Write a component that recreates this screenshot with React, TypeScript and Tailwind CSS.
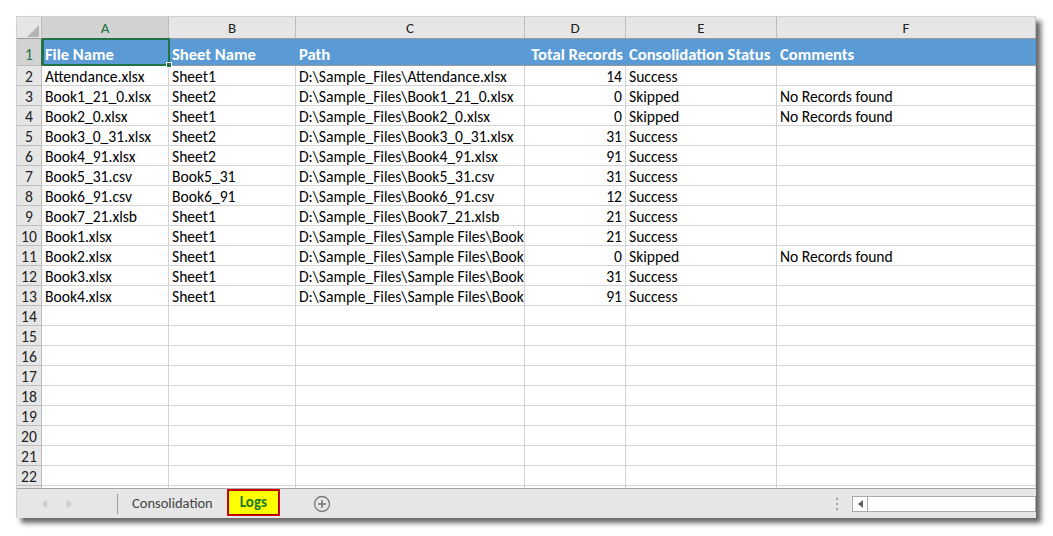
import React from 'react';

const COLS = ['A', 'B', 'C', 'D', 'E', 'F'];

const HEADERS = ['File Name', 'Sheet Name', 'Path', 'Total Records', 'Consolidation Status', 'Comments'];

const ROWS: [string, string, string, number, string, string][] = [
  ['Attendance.xlsx', 'Sheet1', 'D:\\Sample_Files\\Attendance.xlsx', 14, 'Success', ''],
  ['Book1_21_0.xlsx', 'Sheet2', 'D:\\Sample_Files\\Book1_21_0.xlsx', 0, 'Skipped', 'No Records found'],
  ['Book2_0.xlsx', 'Sheet1', 'D:\\Sample_Files\\Book2_0.xlsx', 0, 'Skipped', 'No Records found'],
  ['Book3_0_31.xlsx', 'Sheet2', 'D:\\Sample_Files\\Book3_0_31.xlsx', 31, 'Success', ''],
  ['Book4_91.xlsx', 'Sheet2', 'D:\\Sample_Files\\Book4_91.xlsx', 91, 'Success', ''],
  ['Book5_31.csv', 'Book5_31', 'D:\\Sample_Files\\Book5_31.csv', 31, 'Success', ''],
  ['Book6_91.csv', 'Book6_91', 'D:\\Sample_Files\\Book6_91.csv', 12, 'Success', ''],
  ['Book7_21.xlsb', 'Sheet1', 'D:\\Sample_Files\\Book7_21.xlsb', 21, 'Success', ''],
  ['Book1.xlsx', 'Sheet1', 'D:\\Sample_Files\\Sample Files\\Book1.xlsx', 21, 'Success', ''],
  ['Book2.xlsx', 'Sheet1', 'D:\\Sample_Files\\Sample Files\\Book2.xlsx', 0, 'Skipped', 'No Records found'],
  ['Book3.xlsx', 'Sheet1', 'D:\\Sample_Files\\Sample Files\\Book3.xlsx', 31, 'Success', ''],
  ['Book4.xlsx', 'Sheet1', 'D:\\Sample_Files\\Sample Files\\Book4.xlsx', 91, 'Success', ''],
];

const EMPTY_ROWS = [14, 15, 16, 17, 18, 19, 20, 21, 22, 23];

const grid = 'grid grid-cols-[25px_127px_127px_229px_101px_151px_1fr]';

const Cell = ({ children, right }: { children?: React.ReactNode; right?: boolean }) => (
  <div
    className={`h-5 border-r border-b border-[#d4d4d4] px-[3px] pt-px leading-[20px] whitespace-nowrap overflow-hidden ${
      right ? 'text-right' : ''
    }`}
  >
    {children}
  </div>
);

const RowNum = ({ n }: { n: number }) => (
  <div className="h-5 border-r border-b border-[#bdbdbd] bg-[#e6e6e6] pt-px text-center leading-[20px] text-[#222]">
    {n}
  </div>
);

export default function App() {
  return (
    <div className="min-h-screen bg-white pt-4 pl-4 font-['Carlito','Lato','Liberation_Sans',sans-serif] text-[15.6px] text-black">
      <div className="flex h-[502px] w-[1020px] flex-col overflow-hidden border-t border-l border-[#d0d0d0] bg-white shadow-[5px_5px_5px_rgba(0,0,0,0.6)]">
        {/* column letters */}
        <div className={`${grid} h-[22px] bg-[#e6e6e6] text-[15px] text-[#222]`}>
          <div className="relative border-r border-b border-[#bdbdbd]">
            <svg className="absolute right-[2px] bottom-[3px]" width="12" height="12" viewBox="0 0 12 12">
              <polygon points="12,0 12,12 0,12" fill="#b4b4b4" />
            </svg>
          </div>
          {COLS.map((c, i) => (
            <div
              key={c}
              className={`flex items-center justify-center border-r border-b ${
                i === 0
                  ? 'border-b-[#217346] border-r-[#bdbdbd] bg-[#d2d2d2] text-[#217346]'
                  : 'border-[#bdbdbd]'
              }`}
            >
              {c}
            </div>
          ))}
        </div>

        {/* header row */}
        <div className={`${grid} relative -mt-px h-[28px] border-t border-[#9a9a9a]`}>
          <div className="flex items-end justify-center border-r border-b border-[#bdbdbd] border-r-[#217346] bg-[#d2d2d2] pb-0 leading-[20px] text-[#217346]">
            1
          </div>
          {HEADERS.map((h, i) => (
            <div
              key={h}
              className={`flex items-end overflow-hidden whitespace-nowrap border-b border-[#9a9a9a] bg-[#5b9bd5] px-[3px] pb-0 leading-[22px] text-[16.6px] font-bold text-white ${
                i === 3 ? 'justify-end' : ''
              }`}
            >
              {h}
            </div>
          ))}
          <div className="pointer-events-none absolute top-[-1px] left-[25px] h-[28px] w-[128px] border-2 border-[#217346]">
            <div className="absolute -right-[4px] -bottom-[4px] h-[6px] w-[6px] border border-white bg-[#217346]" />
          </div>
        </div>

        {/* data rows */}
        <div className="flex-1 overflow-hidden">
          {ROWS.map((r, i) => (
            <div key={i} className={grid}>
              <RowNum n={i + 2} />
              <Cell>{r[0]}</Cell>
              <Cell>{r[1]}</Cell>
              <Cell>{r[2]}</Cell>
              <Cell right>{r[3]}</Cell>
              <Cell>{r[4]}</Cell>
              <Cell>{r[5]}</Cell>
            </div>
          ))}
          {EMPTY_ROWS.map((n) => (
            <div key={n} className={grid}>
              <RowNum n={n} />
              <Cell />
              <Cell />
              <Cell />
              <Cell />
              <Cell />
              <Cell />
            </div>
          ))}
        </div>

        {/* sheet tabs */}
        <div className="flex h-[30px] shrink-0 items-center border-t border-[#a6a6a6] bg-[#e6e6e6] text-[14.5px]">
          <div className="flex w-[100px] items-center gap-[20px] pl-[24px]">
            <svg width="6" height="10" viewBox="0 0 6 10">
              <polygon points="6,1 6,9 1,5" fill="#c8c8c8" />
            </svg>
            <svg width="6" height="10" viewBox="0 0 6 10">
              <polygon points="0,1 0,9 5,5" fill="#c8c8c8" />
            </svg>
          </div>
          <div className="h-[20px] w-px bg-[#9d9d9d]" />
          <div className="px-[14px] text-[#444]">Consolidation</div>
          <div className="-mt-[3px] flex h-[27px] items-center border border-[#e00000] bg-[#ffff00] px-[12px] text-[15px] font-bold text-[#1e7a1e] shadow-[inset_0_0_0_1px_#a00000]">
            Logs
          </div>
          <svg className="ml-[33px]" width="18" height="18" viewBox="0 0 18 18">
            <circle cx="9" cy="9" r="7.5" fill="none" stroke="#7a7a7a" strokeWidth="1.3" />
            <line x1="9" y1="5" x2="9" y2="13" stroke="#7a7a7a" strokeWidth="1.6" />
            <line x1="5" y1="9" x2="13" y2="9" stroke="#7a7a7a" strokeWidth="1.6" />
          </svg>
          <div className="flex-1" />
          <div className="mr-[14px] flex flex-col gap-[3px]">
            <div className="h-[2px] w-[2px] bg-[#a0a0a0]" />
            <div className="h-[2px] w-[2px] bg-[#a0a0a0]" />
            <div className="h-[2px] w-[2px] bg-[#a0a0a0]" />
          </div>
          <div className="flex h-[16px] w-[184px] items-stretch border border-[#ababab] bg-white">
            <div className="flex w-[15px] items-center justify-center border-r border-[#ababab]">
              <svg width="5" height="8" viewBox="0 0 5 8">
                <polygon points="5,0 5,8 0,4" fill="#606060" />
              </svg>
            </div>
          </div>
        </div>
      </div>
    </div>
  );
}
